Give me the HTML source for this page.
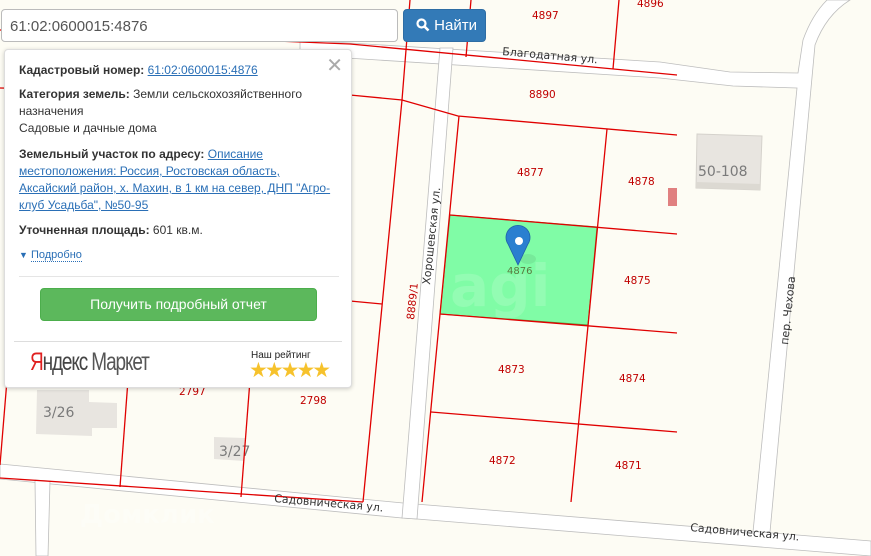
<!DOCTYPE html>
<html><head><meta charset="utf-8"><style>
body{margin:0;width:871px;height:556px;overflow:hidden;background:#fdfcf4;font-family:"Liberation Sans",sans-serif;position:relative}
svg{position:absolute;left:0;top:0}
.lbl{font-family:"DejaVu Sans",sans-serif;font-size:10.5px;fill:#c00000}
#search{position:absolute;left:1px;top:9px;width:397px;height:33px;border:1px solid #bbb;border-radius:4px;background:#fff;box-sizing:border-box;font-size:15px;color:#555;padding:8px 0 0 8px}
#btn{position:absolute;left:403px;top:9px;width:83px;height:33px;background:#337ab7;border:1px solid #2e6da4;border-radius:4px;box-sizing:border-box;color:#fff;font-size:15px;padding:7px 0 0 12px}
#panel{position:absolute;left:4px;top:49px;width:348px;height:339px;background:#fff;border:1px solid #ddd;border-radius:4px;box-shadow:0 1px 4px rgba(0,0,0,.2);box-sizing:border-box;font-size:12px;color:#333}
.t{position:absolute;left:14px;line-height:17px}
b{font-weight:bold}
a{color:#2a6fb6;text-decoration:underline}
</style></head><body>
<svg width="871" height="556" viewBox="0 0 871 556">
<g fill="#fff" stroke="#bdbdbd" stroke-width="0.8">
<path d="M300,40 L660,62 L730,72 L798,73 L803,40 Q812,15 827,0 L850,0 Q826,15 815,45 L770,532 L753,532 L797,88 L733,86 L660,78 L300,55 Z"/>
<path d="M0,464 L403,503 L440,506 L871,541 L871,556 L417,519 L402,518 L0,479 Z"/>
<path d="M440,48 L453,48 L417,519 L402,518 Z"/>
<path d="M35,480 L50,481 L48,556 L36,556 Z"/>
</g>
<path d="M450,215 L597,227 L588,325 L440,314 Z" fill="#80fca6" stroke="#5a9a40" stroke-width="1"/>
<text x="450" y="306" font-size="58" font-family="DejaVu Sans,sans-serif" font-weight="bold" fill="#fff" fill-opacity="0.15">agi</text>
<path d="M697,134 L762,136 L760,190 L696,188 Z" fill="#e8e5e0" stroke="#d5d2cc"/>
<path d="M696,182 L760,184 L760,190 L696,188 Z" fill="#dcd9d2"/>
<text x="698" y="176" font-size="14" fill="#7a7a7a" font-family="DejaVu Sans,sans-serif">50-108</text>
<rect x="668" y="188" width="9" height="18" fill="#e08080"/>
<path d="M37,390 L89,390 L89,402 L117,403 L117,428 L92,428 L92,436 L36,434 Z" fill="#e8e5e0"/>
<text x="43" y="417" font-size="14" fill="#7a7a7a" font-family="DejaVu Sans,sans-serif">3/26</text>
<path d="M214,437 L245,438 L244,461 L214,459 Z" fill="#e8e5e0"/>
<text x="219" y="456" font-size="14" fill="#7a7a7a" font-family="DejaVu Sans,sans-serif">3/27</text>
<g stroke="#e00000" stroke-width="1.3" fill="none">
<path d="M0,30 L350,44 L677,75"/>
<path d="M0,88 L350,95 L402,100 L458,116 L677,135"/>
<path d="M410,0 L402,100 L363,502"/>
<path d="M471,0 L466,57"/>
<path d="M619,0 L613,69"/>
<path d="M459,116 L422,502"/>
<path d="M607,129 L571,502"/>
<path d="M450,215 L677,234"/>
<path d="M440,314 L677,333"/>
<path d="M431,412 L677,432"/>
<path d="M350,301 L382,304"/>
<path d="M0,478 L363,502"/>
<path d="M7,380 L0,465"/><path d="M128,380 L120,487"/><path d="M250,380 L241,497"/>
</g>
<g class="lbl">
<text x="532" y="19">4897</text><text x="637" y="7">4896</text>
<text x="529" y="98">8890</text><text x="517" y="176">4877</text>
<text x="628" y="185">4878</text><text x="624" y="284">4875</text>
<text x="498" y="373">4873</text><text x="619" y="382">4874</text>
<text x="489" y="464">4872</text><text x="615" y="469">4871</text>
<text x="179" y="395">2797</text><text x="300" y="404">2798</text>
<text x="0" y="0" transform="translate(414,320) rotate(-84)">8889/1</text>
</g>
<text x="507" y="274" font-size="10" fill="#5a7a40" font-family="DejaVu Sans,sans-serif">4876</text>
<g font-family="DejaVu Sans,sans-serif" font-size="11" fill="#333">
<text transform="translate(502,55) rotate(5)">Благодатная ул.</text>
<text transform="translate(430,285) rotate(-84)">Хорошевская ул.</text>
<text transform="translate(788,345) rotate(-84)">пер. Чехова</text>
<text transform="translate(690,531) rotate(5)">Садовническая ул.</text>
<text transform="translate(274,502) rotate(5)">Садовническая ул.</text>
</g>
<text x="80" y="523" font-size="26" font-family="DejaVu Sans,sans-serif" font-weight="bold" fill="#fff" fill-opacity="0.3">Домклик</text>
<ellipse cx="528" cy="259" rx="8" ry="5" fill="#000" opacity="0.07"/>
<path d="M518,265 L508,244 A12,12 0 1 1 528,244 Z" fill="#2a7fd0" stroke="#1f63a8" stroke-width="0.8"/>
<circle cx="519" cy="241" r="4" fill="#fff"/>
</svg>
<div id="search">61:02:0600015:4876</div>
<div id="btn"><svg width="14" height="14" viewBox="0 0 14 14" style="position:static;vertical-align:-2px"><circle cx="5.5" cy="5.5" r="4" fill="none" stroke="#fff" stroke-width="2.2"/><path d="M8.5,8.5 L12.5,12.5" stroke="#fff" stroke-width="2.6"/></svg> Найти</div>
<div id="panel">
<div style="position:absolute;right:8px;top:3px;font-size:20px;color:#aaa">✕</div>
<div class="t" style="top:12px"><b>Кадастровый номер:</b> <a>61:02:0600015:4876</a></div>
<div class="t" style="top:36px"><b>Категория земель:</b> Земли сельскохозяйственного<br>назначения<br>Садовые и дачные дома</div>
<div class="t" style="top:96px"><b>Земельный участок по адресу:</b> <a>Описание<br>местоположения: Россия, Ростовская область,<br>Аксайский район, х. Махин, в 1 км на север, ДНП "Агро-<br>клуб Усадьба", №50-95</a></div>
<div class="t" style="top:172px"><b>Уточненная площадь:</b> 601 кв.м.</div>
<div class="t" style="top:197px;font-size:11px"><span style="color:#2a6fb6;font-size:9px">▼</span> <span style="color:#2a6fb6;border-bottom:1px dotted #2a6fb6">Подробно</span></div>
<div style="position:absolute;left:14px;top:226px;width:320px;height:1px;background:#e5e5e5"></div>
<div style="position:absolute;left:35px;top:238px;width:277px;height:33px;background:#5cb85c;border:1px solid #4cae4c;border-radius:4px;box-sizing:border-box;color:#fff;font-size:14px;text-align:center;line-height:31px">Получить подробный отчет</div>
<div style="position:absolute;left:9px;top:291px;width:328px;height:1px;background:#ddd"></div>
<div style="position:absolute;left:25px;top:298px;font-size:25px;letter-spacing:-1.5px;transform:scaleX(0.76);transform-origin:left;color:#444;white-space:nowrap"><span style="color:#e02020">Я</span>ндекс<span style="color:#555"> Маркет</span></div>
<div style="position:absolute;left:246px;top:300px;font-size:10px;color:#222">Наш рейтинг</div>
<div style="position:absolute;left:244px;top:308px;font-size:21px;color:#f6c22c;letter-spacing:-3px">★★★★★</div>
</div>
</body></html>
